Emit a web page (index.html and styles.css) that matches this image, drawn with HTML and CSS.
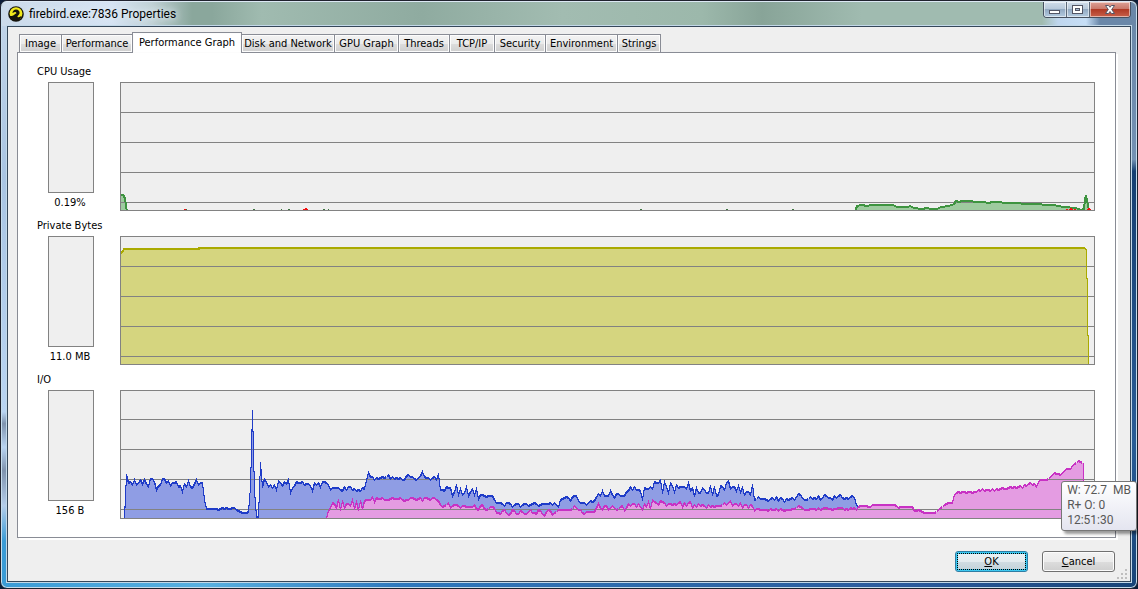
FILE: index.html
```html
<!DOCTYPE html>
<html lang="en">
<head>
<meta charset="utf-8">
<title>firebird.exe:7836 Properties</title>
<link rel="stylesheet" href="styles.css">
</head>
<body>
<div class="window">
  <header class="titlebar">
    <svg class="app-icon" viewBox="0 0 16 16" aria-hidden="true">
      <circle cx="8" cy="8" r="7.8" fill="#15140c"/>
      <circle cx="8" cy="7.6" r="6.4" fill="#f2ea1c"/>
      <path d="M1.400 9.200c1.400 1.200 3 1 4.200.1 1-.8 1.600-1.500 2.700-1.800.2-.9-.6-1.500-1.500-1.400-.8.1-1.400.6-2.400.9.4-2.200 1.700-3.600 3.700-3.500 2.300.1 3.800 1.800 3.500 3.700-.3 1.700-2.200 2.300-2.200 3.500.8 1 2.600.5 4.200-.9-.8 3.400-3 5.200-5.800 5.200-3.400 0-5.900-2.300-6.400-5.800z" fill="#15140c"/>
    </svg>
    <h1 class="title">firebird.exe:7836 Properties</h1>
    <div class="caption-buttons">
      <button class="caption" type="button" aria-label="Minimize">
        <svg class="glyph" viewBox="0 0 12 12"><rect x="0.500" y="6.500" width="10" height="3" fill="#fff" stroke="#535666"/></svg>
      </button>
      <button class="caption" type="button" aria-label="Maximize">
        <svg class="glyph" viewBox="0 0 12 12"><rect x="0.500" y="1.500" width="10" height="8" fill="#fff" stroke="#535666"/><rect x="3.500" y="4.500" width="4" height="2" fill="#a9bdd4" stroke="#535666"/></svg>
      </button>
      <button class="caption caption-close" type="button" aria-label="Close">
        <svg class="glyph" viewBox="0 0 12 12"><path d="M1.500 1.500h3l1.500 1.800 1.500-1.800h3l-2.800 4 2.800 4h-3l-1.500-2-1.500 2h-3l2.800-4z" fill="#fff" stroke="#535666"/></svg>
      </button>
    </div>
  </header>

  <main class="client">
    <div class="tabs" role="tablist">
      <button class="tab" role="tab" type="button">Image</button>
      <button class="tab" role="tab" type="button">Performance</button>
      <button class="tab tab-active" role="tab" type="button" aria-selected="true">Performance Graph</button>
      <button class="tab" role="tab" type="button">Disk and Network</button>
      <button class="tab" role="tab" type="button">GPU Graph</button>
      <button class="tab" role="tab" type="button">Threads</button>
      <button class="tab" role="tab" type="button">TCP/IP</button>
      <button class="tab" role="tab" type="button">Security</button>
      <button class="tab" role="tab" type="button">Environment</button>
      <button class="tab" role="tab" type="button">Strings</button>
    </div>

    <div class="panel" role="tabpanel">
      <section class="group">
        <h2 class="label">CPU Usage</h2>
        <div class="row">
          <div class="gauge"><div class="meter"></div><div class="value">0.19%</div></div>
          <div class="chart">
            <svg class="plot" viewBox="0 0 973 127" preserveAspectRatio="none">
              <defs><polyline id="cpu" points="-2,130 -2,112 2,112 4,115 5,122 6,129 734,129 736,123 740,122 747,123 749,122 772,122 776,124 787,124 789,123 793,125 801,126 806,125 810,126 816,126 820,124 828,123 833,121 835,118 838,119 841,118 862,119 868,120 871,119 890,120 910,121 932,122 943,124 955,125 960,127 963,126 964,116 965,112 966,118 968,127 970,130"/></defs>
              <use href="#cpu" class="cpu-fill"/>
              <path class="grid" d="M0 29.500H973M0 59.500H973M0 89.500H973M0 119.500H973"/>
              <use href="#cpu" class="cpu-line"/>
              <path class="cpu-ticks" d="M64 126.500h2M132 126.500h2M160 126.500h1M167 126.500h2M202 126.500h2M207 126.500h1M519 126.500h2M605 126.500h2M671 126.500h2"/>
              <path class="kernel" d="M182 126.500h5M184 125.500h2M63 126.500h2M945 126.500h2M948 126.500h4M949 125.500h2M953 126.500h2M966 126.500h4M967 125.500h2"/>
            </svg>
          </div>
        </div>
      </section>

      <section class="group">
        <h2 class="label">Private Bytes</h2>
        <div class="row">
          <div class="gauge"><div class="meter"></div><div class="value">11.0 MB</div></div>
          <div class="chart">
            <svg class="plot" viewBox="0 0 973 127" preserveAspectRatio="none">
              <path class="bytes-fill" d="M0 16L3 12H78V11H964L966 13V41H967V98H968V127H0z"/>
              <path class="grid" d="M0 29.500H973M0 59.500H973M0 89.500H973M0 119.500H973"/>
              <path class="bytes-line" d="M0 17L3 12H78V11H964"/>
              <path class="bytes-drop" d="M964 11.500L965.500 13V41.500H966.500V98.500H967.500V127"/>
            </svg>
          </div>
        </div>
      </section>

      <section class="group">
        <h2 class="label">I/O</h2>
        <div class="row">
          <div class="gauge"><div class="meter"></div><div class="value">156 B</div></div>
          <div class="chart">
            <svg class="plot" viewBox="0 0 973 127" preserveAspectRatio="none">
              <path id="total-fill" class="total-fill"/>
              <path id="write-fill" class="write-fill"/>
              <path class="grid" d="M0 28.500H973M0 58.500H973M0 88.500H973M0 118.500H973"/>
              <path id="total-line" class="total-line"/>
              <path id="write-line" class="write-line"/>
              <path class="write-line" d="M962.500 72V127"/>
            </svg>
            <div class="tooltip" role="tooltip">W: 72.7&nbsp; MB<br>R+ O: 0<br>12:51:30</div>
          </div>
        </div>
      </section>
    </div>

    <footer class="actions">
      <button class="button button-default" type="button"><span class="accel">O</span>K</button>
      <button class="button" type="button"><span class="accel">C</span>ancel</button>
      <svg class="grip" viewBox="0 0 12 12" aria-hidden="true"><path d="M8 1h2v2h-2zM4 5h2v2h-2zM8 5h2v2h-2zM0 9h2v2h-2zM4 9h2v2h-2zM8 9h2v2h-2z"/></svg>
    </footer>
  </main>
</div>
<script src="charts.js"></script>
</body>
</html>
```

FILE: styles.css
```css
* { box-sizing: border-box; }

body {
  margin: 0;
  background: #0b1c38;
  color: #000;
  font: 11px/16px "DejaVu Sans Condensed", "DejaVu Sans", sans-serif;
}

button { font: inherit; color: inherit; margin: 0; }

.window {
  display: flex;
  flex-direction: column;
  min-height: 100vh;
  padding: 0 6px 6px;
  border: 1px solid #20222e;
  border-radius: 7px;
  background:
    linear-gradient(90deg, #3a9bd6, #58b0e0 18%, #2e78bd 35%, #2c67a8 60%, #2a5a9c 80%, #174478) bottom / 100% 6px no-repeat,
    linear-gradient(#c4d6ea, #a9c4e2 30%, #b9d4f2 70%, #7f93ae 72%, #b9d4f2 76%, #7f93ae 80%, #b4cdea 86%, #3a9bd6 92%) left / 8px 100% no-repeat,
    linear-gradient(#6a87a8, #7391b3 27%, #163f72 29%, #2a5c96 75%, #174478) right / 8px 100% no-repeat,
    #9cb8ac;
  box-shadow: inset 0 0 0 1px #c5dcec;
}

.titlebar {
  display: flex;
  align-items: center;
  height: 25px;
  margin: 0 -5px;
  padding-left: 6px;
  border-top: 1px solid #dce8f4;
  border-radius: 6px 6px 0 0;
  background:
    linear-gradient(90deg, #cbdaea, #d5e3f3 110px, #c0d1d6 150px, #9cb8ac00 190px),
    linear-gradient(270deg, #6a87a8 36px, #c6def6 50px, #bfd6ee 78px, #9cb8ac00 94px),
    linear-gradient(90deg, #8aa79c 210px, #a0bbb0 260px, #8faba0 420px, #a2bcb1 560px, #9cb8ab 700px, #88a498 760px, #a0bbb0 860px);
}

.app-icon { width: 16px; height: 16px; }

.title {
  flex: 1;
  margin: 0 0 0 5px;
  font: 12px/16px Roboto, "Open Sans", sans-serif;
  text-shadow: 0 0 6px #e2ecf4, 0 0 8px #e2ecf4;
}

.caption-buttons {
  display: flex;
  align-self: flex-start;
  height: 16px;
  margin-right: 5px;
  border: 1px solid #46505f;
  border-top: 0;
  border-radius: 0 0 4px 4px;
  overflow: hidden;
}

.caption {
  display: grid;
  place-items: center;
  width: 23px;
  padding: 0;
  border: 0;
  border-right: 1px solid #5b6879;
  background: linear-gradient(#cfdcea, #b8c9db 45%, #92a9c2 50%, #b4cbe0);
  box-shadow: inset 0 0 0 1px #ffffff88;
}

.caption-close {
  width: 40px;
  border-right: 0;
  background: linear-gradient(#dda196, #c9796b 45%, #b03a25 50%, #c8604a);
}

.glyph { width: 12px; height: 12px; }

.client {
  display: flex;
  flex: 1;
  flex-direction: column;
  padding: 5px 14px 9px 9px;
  border: 1px solid #35475a;
  background: #efefef;
  box-shadow: 0 0 0 1px #c2d8e8;
}

.tabs {
  display: grid;
  grid-template-columns: 42px 71px 109px 93px 64px 51px 45px 51px 72px 43px;
  align-items: end;
  height: 21px;
  margin: 0 0 -1px 2px;
}

.tab {
  height: 19px;
  margin-right: -1px;
  padding: 1px 0 0;
  border: 1px solid #898c95;
  background: linear-gradient(#f3f3f3, #ebebeb 50%, #dddddd 52%, #cfcfcf);
  box-shadow: inset 0 0 0 1px #fcfcfc;
  white-space: nowrap;
}

.tab-active {
  position: relative;
  height: 21px;
  padding: 0 0 1px;
  border-bottom: 0;
  background: #fff;
}

.panel {
  display: flex;
  flex: 1;
  flex-direction: column;
  gap: 7px;
  padding: 11px 20px 17px 19px;
  border: 1px solid #898c95;
  background: #fff;
  box-shadow: 2px 2px 0 #fff;
}

.label {
  margin: 0 0 2px;
  font: inherit;
}

.row {
  display: flex;
  gap: 17px;
}

.gauge { width: 66px; }

.meter {
  height: 111px;
  margin: 0 9px 2px 11px;
  border: 1px solid #828282;
  background: #efefef;
}

.value { text-align: center; }

.chart {
  position: relative;
  flex: 1;
  height: 129px;
  border: 1px solid #828282;
  background: #efefef;
}

.plot {
  display: block;
  width: 100%;
  height: 100%;
  fill: none;
  shape-rendering: crispEdges;
}

.grid { stroke: #828282; }

.cpu-fill { fill: #9ecb9f; }
.cpu-line { stroke: #3e9440; stroke-width: 2px; }
.cpu-ticks { stroke: #3e7440; }
.kernel { stroke: #f01010; }

.bytes-fill { fill: #d5d57f; }
.bytes-line { stroke: #aaaa00; stroke-width: 2px; }
.bytes-drop { stroke: #aaaa00; }

.total-fill { fill: #8f9de4; }
.total-line { stroke: #1f3cc8; }
.write-fill { fill: #e49ce2; }
.write-line { stroke: #c832c4; }

.tooltip {
  position: absolute;
  top: 90px;
  right: -43px;
  padding: 1px 5px 2px;
  border: 1px solid #767676;
  border-radius: 3px;
  background: linear-gradient(#fff, #e4e5f0);
  box-shadow: 3px 3px 3px #00000066;
  color: #575757;
  font: 12px/15px Roboto, "Open Sans", sans-serif;
  white-space: nowrap;
}

.actions {
  position: relative;
  display: flex;
  justify-content: flex-end;
  gap: 14px;
  padding: 13px 1px 0 0;
}

.button {
  width: 73px;
  height: 21px;
  padding: 1px 0 0;
  border: 1px solid #707070;
  border-radius: 3px;
  background: linear-gradient(#f2f2f2, #ebebeb 50%, #dddddd 51%, #cfcfcf);
  box-shadow: inset 0 0 0 1px #fcfcfc;
}

.button-default {
  border-color: #2f7da4;
  outline: 1px dotted #000;
  outline-offset: -3px;
  background: linear-gradient(#eef3f5, #e3ebef 50%, #d0dce2 51%, #c2d2da);
  box-shadow: inset 0 0 0 1px #3cc8f0, inset 0 0 0 2px #3cc8f0;
}

.accel { text-decoration: underline; }

.grip {
  position: absolute;
  right: -13px;
  bottom: -8px;
  width: 12px;
  height: 12px;
  fill: #bfbfbf;
}
```

FILE: charts.js
```js
// I/O history, one reading every two units, heights above the baseline.
const BASE = 127;

const total = [
  0,43,35,36,33,38,33,35,38,34,38,34,31,39,39,36,28,32,33,39,39,35,37,32,35,35,36,31,32,26,
  34,31,37,31,30,34,38,33,35,35,18,9,9,9,9,9,9,8,9,10,9,10,9,9,10,10,8,7,6,5,5,5,6,31,107,27,
  1,1,55,31,39,36,31,33,30,33,28,37,35,32,36,34,38,25,30,32,36,35,35,36,33,34,34,32,27,35,33,
  35,31,36,36,35,33,28,30,30,30,30,28,27,31,28,31,31,28,29,27,28,27,30,29,38,45,41,
  41,38,40,39,40,41,40,41,43,39,41,39,40,39,40,38,38,42,43,41,41,39,38,40,42,46,41,40,40,38,
  40,41,38,44,28,28,27,31,30,30,22,26,33,23,29,23,25,31,22,26,29,23,29,19,23,23,22,21,22,22,
  22,18,15,15,15,14,12,15,15,14,11,13,14,14,11,13,14,14,12,13,14,15,14,12,13,14,14,14,14,15,
  13,15,13,11,18,19,20,21,20,17,21,22,22,17,15,15,15,13,15,17,16,17,21,24,22,27,22,22,22,27,
  23,20,24,24,
  22,22,22,26,27,31,28,31,28,28,27,18,30,29,29,31,29,36,35,35,38,25,36,31,25,35,32,26,33,30,
  31,31,31,29,35,27,30,22,30,25,25,30,28,25,25,32,23,31,22,23,32,31,28,35,37,29,31,31,27,32,
  26,30,23,26,26,23,33,18,19,21,19,19,19,18,17,19,20,18,21,17,20,19,16,19,18,19,20,18,21,24,
  23,20,18,18,19,21,19,20,19,22,18,20,23,22,20,20,18,22,20,22,23,20,19,20,19,21,22,20,13,10
];

const write = [
  0,7,10,15,14,10,18,8,17,10,14,14,12,18,9,16,8,17,9,17,18,18,18,
  21,16,20,19,19,20,18,18,18,19,20,19,19,19,20,18,17,18,18,20,20,19,18,19,20,17,20,20,19,18,
  20,20,18,17,13,11,12,13,15,10,12,13,13,12,10,12,12,11,11,11,11,13,9,8,12,13,9,8,9,11,11,10,
  5,5,4,7,8,5,3,4,8,7,4,4,7,6,4,4,6,8,5,5,4,8,7,4,2,6,8,7,3,5,6,8,8,8,8,8,8,8,9,12,10,8,8,
  5,4,6,6,6,6,6,10,14,10,8,12,12,8,10,12,10,8,9,
  11,12,7,10,14,12,14,14,11,14,11,8,14,11,16,9,18,16,15,13,17,16,15,12,14,14,13,14,13,15,16,
  11,15,12,15,16,10,13,11,14,12,13,12,10,13,11,12,11,12,12,12,13,15,13,15,17,12,14,14,12,15,
  10,13,13,10,13,12,7,9,9,8,8,8,8,7,9,8,8,9,7,9,8,7,8,8,8,9,9,10,12,11,10,8,8,8,9,9,9,8,10,
  8,9,10,10,9,9,8,9,9,10,10,10,8,9,8,10,9,10,8,11,12,12,12,12,11,
  11,13,13,13,13,13,13,13,13,13,13,13,13,12,10,11,11,11,11,11,11,11,7,7,8,7,6,5,5,5,5,5,5,6,
  8,10,11,13,14,15,15,15,23,25,26,25,26,26,25,26,26,25,26,26,28,27,29,27,28,28,27,29,27,29,
  28,29,30,29,29,30,31,30,31,30,31,32,30,33,32,34,35,33,34,31,36,38,38,38,38,39,41,43,45,44,
  44,43,45,47,49,49,49,52,54,55,57,56,55
];

// The outline is drawn as two one-unit strands, so that flat runs are
// heavier than steep ones.
function plot(name, start, values) {
  const strand = (drop) =>
    values.map((h, i) => `${start + i * 2 + 0.5} ${BASE - h + drop}`).join("L");
  const end = start + (values.length - 1) * 2 + 1;
  document.getElementById(`${name}-fill`)
    .setAttribute("d", `M${start} ${BASE}L${strand(0)}L${end} ${BASE}z`);
  document.getElementById(`${name}-line`)
    .setAttribute("d", `M${strand(-0.5)}M${strand(0.5)}`);
}

plot("total", 3, total);
plot("write", 205, write);
```
